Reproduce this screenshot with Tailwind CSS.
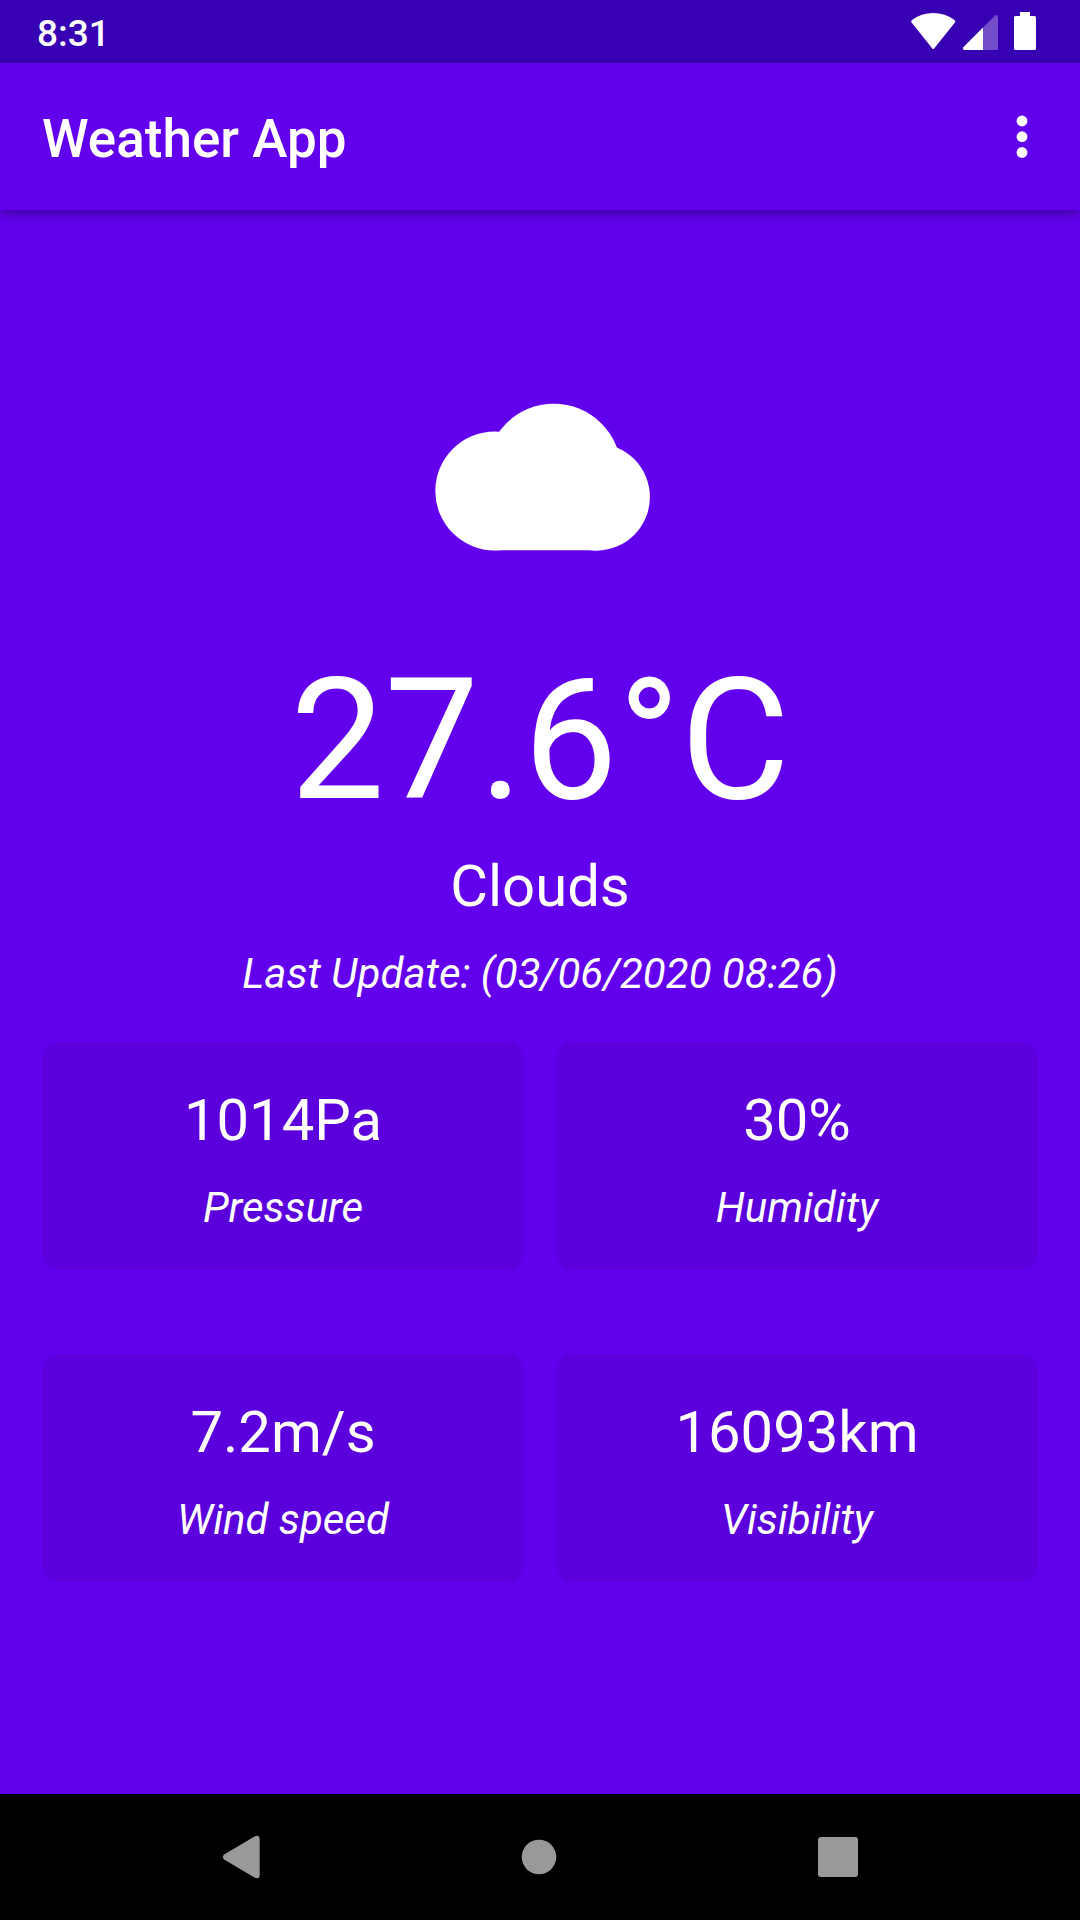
<!DOCTYPE html>
<html lang="en">
<head>
<meta charset="utf-8">
<meta name="viewport" content="width=device-width, initial-scale=1">
<title>Weather App</title>
<script src="https://cdn.jsdelivr.net/npm/@tailwindcss/browser@4"></script>
</head>
<body class="flex min-h-screen flex-col bg-[#6200ee] font-['Roboto',sans-serif] text-white">

  <!-- System status bar -->
  <div class="flex h-[63px] shrink-0 items-center justify-between bg-[#3700b3] pr-11 pl-[37px]">
    <time class="pt-1 text-[37px] leading-11 font-medium">8:31</time>
    <div class="flex items-center">
      <svg class="h-[63px] w-[45px]" viewBox="0 0 45 63" fill="#fff" aria-label="Wi-Fi" role="img">
        <path d="M.4 22.200Q-.2 21 1 20Q10.300 13 22.200 13T43.500 20Q44.700 21 44.100 22.200L23.100 48.400Q22.200 49.400 21.300 48.400Z"/>
      </svg>
      <svg class="ml-[7px] h-[63px] w-[35px]" viewBox="0 0 35 63" fill="#fff" aria-label="Signal" role="img">
        <path fill-opacity=".3" d="M20 27.500L32 15.600Q35 13.800 35 17V48.500Q35 50 33.500 50H20Z"/>
        <path d="M20 27.500V50H1.500Q0 50 0 48.500V48Q0 47.300.7 46.700Z"/>
      </svg>
      <svg class="ml-4 h-[63px] w-[22px]" viewBox="0 0 22 63" fill="#fff" aria-label="Battery" role="img">
        <path d="M6 12H16V16H20.500Q22 16 22 17.500V48.500Q22 50 20.500 50H1.500Q0 50 0 48.500V17.500Q0 16 1.500 16H6Z"/>
      </svg>
    </div>
  </div>

  <!-- App bar -->
  <header class="flex h-[147px] shrink-0 items-center justify-between pr-8 pl-[42px] shadow-[0_4px_10px_rgba(0,0,0,0.33)]">
    <h1 class="pt-1 text-[53px] leading-[62px] font-medium">Weather App</h1>
    <button type="button" aria-label="More options" class="flex h-24 w-[52px] items-center justify-center">
      <svg class="h-11 w-3" viewBox="0 0 12 44" fill="#fff">
        <circle cx="6" cy="6" r="5.400"/><circle cx="6" cy="21.700" r="5.400"/><circle cx="6" cy="37.500" r="5.400"/>
      </svg>
    </button>
  </header>

  <main class="flex grow flex-col px-[42px] pt-[190px] pb-16">
    <section class="flex flex-col items-center">
      <svg class="ml-1 h-[156px] w-[224px]" viewBox="430 400 224 156" fill="#fff" aria-hidden="true">
        <circle cx="494.800" cy="491" r="59.500"/>
        <circle cx="553.800" cy="471" r="67.300"/>
        <circle cx="596.200" cy="497" r="53.700"/>
        <path d="M494.800 480H596V550.300H494.800Z"/>
      </svg>
      <p class="mt-[85px] text-[168px] leading-[200px]">27.6°C</p>
      <p class="mt-[11px] text-[58px] leading-[68px]">Clouds</p>
      <p class="mt-[29px] text-[42px] leading-[50px] italic">Last Update: (03/06/2020 08:26)</p>
    </section>

    <dl class="mt-[43px] grid grid-cols-2 gap-x-8 gap-y-[84px] text-center">
      <div class="flex flex-col-reverse gap-[29px] rounded-[18px] bg-[#5b00dd] pt-11 pb-[37px]">
        <dt class="text-[42px] leading-[50px] italic">Pressure</dt>
        <dd class="text-[58px] leading-[68px]">1014Pa</dd>
      </div>
      <div class="flex flex-col-reverse gap-[29px] rounded-[18px] bg-[#5b00dd] pt-11 pb-[37px]">
        <dt class="text-[42px] leading-[50px] italic">Humidity</dt>
        <dd class="text-[58px] leading-[68px]">30%</dd>
      </div>
      <div class="flex flex-col-reverse gap-[29px] rounded-[18px] bg-[#5b00dd] pt-11 pb-[37px]">
        <dt class="text-[42px] leading-[50px] italic">Wind speed</dt>
        <dd class="text-[58px] leading-[68px]">7.2m/s</dd>
      </div>
      <div class="flex flex-col-reverse gap-[29px] rounded-[18px] bg-[#5b00dd] pt-11 pb-[37px]">
        <dt class="text-[42px] leading-[50px] italic">Visibility</dt>
        <dd class="text-[58px] leading-[68px]">16093km</dd>
      </div>
    </dl>
  </main>

  <!-- System navigation bar -->
  <nav aria-label="System" class="grid h-[126px] shrink-0 grid-cols-3 bg-black pr-[93px] pl-[92px]">
    <button type="button" aria-label="Back" class="flex items-center justify-center">
      <svg class="h-11 w-10" viewBox="0 0 40 44" fill="#999">
        <path d="M3.500 19.200L33.500 1.400Q38.700-.8 38.700 4.500V39.500Q38.700 44.800 33.500 42.600L3.500 24.800Q.2 22 3.500 19.200Z"/>
      </svg>
    </button>
    <button type="button" aria-label="Home" class="flex items-center justify-center">
      <svg class="size-9" viewBox="0 0 36 36" fill="#999"><circle cx="18" cy="18" r="17.300"/></svg>
    </button>
    <button type="button" aria-label="Recent apps" class="flex items-center justify-center">
      <svg class="size-10" viewBox="0 0 40 40" fill="#999"><rect width="40" height="40" rx="3"/></svg>
    </button>
  </nav>
</body>
</html>
